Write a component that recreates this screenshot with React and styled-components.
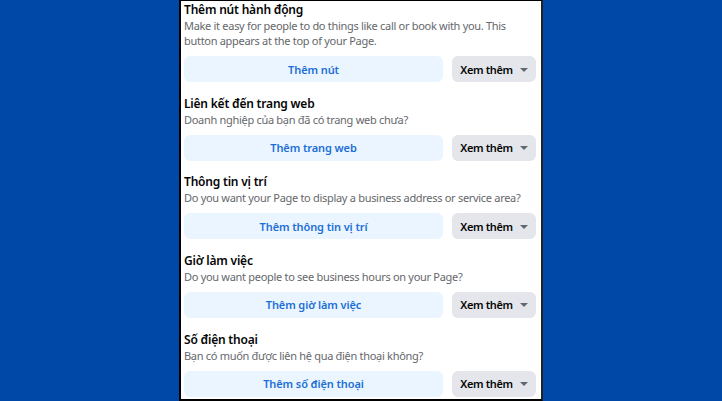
import React from "react";
import styled, { createGlobalStyle } from "styled-components";

const Global = createGlobalStyle`
  html, body { margin: 0; padding: 0; background: #0048a8; }
  body { font-family: "Noto Sans", "Liberation Sans", sans-serif; }
`;

const Stage = styled.div`
  width: 722px;
  height: 401px;
  display: flex;
  justify-content: center;
  background: #0048a8;
  overflow: hidden;
`;

const Panel = styled.div`
  width: 352px;
  height: 397px;
  background: #fff;
  border-left: 2px solid #000;
  border-right: 2px solid #222;
  border-bottom: 2px solid #000;
  border-top: 1px solid #000;
  padding: 1px 5px 0 3px;
  display: flex;
  flex-direction: column;
  gap: 13.67px;
  box-sizing: content-box;
`;

const Section = styled.div`
  display: flex;
  flex-direction: column;
`;

const Title = styled.div`
  font-size: 12px;
  font-weight: 600;
  line-height: 16px;
  letter-spacing: -0.2px;
  color: #050505;
`;

const Desc = styled.div`
  font-size: 11px;
  line-height: 15px;
  letter-spacing: -0.3px;
  color: #65676b;
  margin-bottom: 8px;
`;

const Row = styled.div`
  display: flex;
  gap: 9px;
`;

const Button = styled.button`
  height: 26px;
  border: none;
  border-radius: 6px;
  font-family: inherit;
  font-size: 11px;
  font-weight: 600;
  letter-spacing: ${(p) => (p.$primary ? "-0.1px" : "-0.35px")};
  display: flex;
  align-items: center;
  justify-content: center;
  gap: 7px;
  padding: 0;
  background: ${(p) => (p.$primary ? "#ebf5ff" : "#e4e6eb")};
  color: ${(p) => (p.$primary ? "#1b6fd6" : "#050505")};
  flex: ${(p) => (p.$primary ? "1" : "0 0 84px")};
`;

const Caret = styled.span`
  width: 0;
  height: 0;
  border-left: 4px solid transparent;
  border-right: 4px solid transparent;
  border-top: 4px solid #606770;
  margin-top: 1px;
`;

const items = [
  {
    title: "Thêm nút hành động",
    desc: "Make it easy for people to do things like call or book with you. This button appears at the top of your Page.",
    action: "Thêm nút",
  },
  {
    title: "Liên kết đến trang web",
    desc: "Doanh nghiệp của bạn đã có trang web chưa?",
    action: "Thêm trang web",
  },
  {
    title: "Thông tin vị trí",
    desc: "Do you want your Page to display a business address or service area?",
    action: "Thêm thông tin vị trí",
  },
  {
    title: "Giờ làm việc",
    desc: "Do you want people to see business hours on your Page?",
    action: "Thêm giờ làm việc",
  },
  {
    title: "Số điện thoại",
    desc: "Bạn có muốn được liên hệ qua điện thoại không?",
    action: "Thêm số điện thoại",
  },
];

export default function App() {
  return (
    <>
      <Global />
      <Stage>
        <Panel>
          {items.map((it) => (
            <Section key={it.title}>
              <Title>{it.title}</Title>
              <Desc>{it.desc}</Desc>
              <Row>
                <Button $primary>{it.action}</Button>
                <Button>
                  Xem thêm <Caret />
                </Button>
              </Row>
            </Section>
          ))}
        </Panel>
      </Stage>
    </>
  );
}
